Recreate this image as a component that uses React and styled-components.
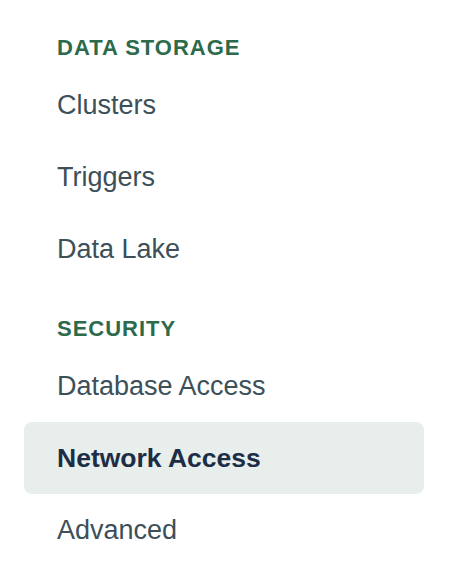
import React from 'react'
import styled, { createGlobalStyle } from 'styled-components';

const GlobalStyle = createGlobalStyle`
    body{
        margin: 0;
        background: #ffffff;
        font-family: "Liberation Sans", Arial, sans-serif;
    }
`

const sections = [
    { title: 'DATA STORAGE', items: ['Clusters', 'Triggers', 'Data Lake'] },
    { title: 'SECURITY', items: ['Database Access', 'Network Access', 'Advanced'] },
]

export default function App() {
    const active = 'Network Access';
    return (
        <>
            <GlobalStyle />
            <Nav>
                {sections.map((section) => (
                    <Section key={section.title}>
                        <Heading>{section.title}</Heading>
                        <ul>
                            {section.items.map((item) => (
                                <Item key={item} $active={item === active}>{item}</Item>
                            ))}
                        </ul>
                    </Section>
                ))}
            </Nav>
        </>
    )
}

const Nav = styled.nav`
    width: 400px;
    padding: 36px 0 0 24px;
    display: flex;
    flex-direction: column;
    gap: 32px;
`

const Section = styled.section`
    display: flex;
    flex-direction: column;
    gap: 9px;
    ul{
        list-style: none;
        margin: 0;
        padding: 0;
    }
`

const Heading = styled.h3`
    margin: 0;
    padding-left: 33px;
    height: 24px;
    line-height: 24px;
    font-size: 22px;
    font-weight: 700;
    letter-spacing: 1px;
    color: #2b6a4b;
`

const Item = styled.li`
    height: 72px;
    display: flex;
    align-items: center;
    padding-left: 33px;
    border-radius: 8px;
    font-size: ${(p) => (p.$active ? '26.5px' : '27px')};
    font-weight: ${(p) => (p.$active ? 700 : 400)};
    color: ${(p) => (p.$active ? '#1c2d45' : '#3d4f58')};
    background: ${(p) => (p.$active ? '#e7eeec' : 'transparent')};
`
